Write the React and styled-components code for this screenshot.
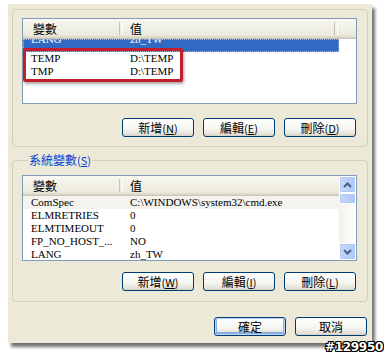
import React from 'react'
import styled, { createGlobalStyle } from 'styled-components'

const GlobalStyle = createGlobalStyle`
  html, body { margin: 0; padding: 0; background: #fff; }
  body { font-family: "Liberation Serif", "Noto Sans CJK TC", serif; }
  * { box-sizing: border-box; }
`

const Page = styled.div`
  position: relative;
  width: 384px;
  height: 353px;
  overflow: hidden;
  padding: 4px 0 0 8px;
`

const Dialog = styled.div`
  width: 364px;
  height: 339px;
  background: #ece9d8;
  box-shadow: 3px 4px 3px rgba(0, 0, 0, 0.55);
  padding: 5px 4px 0 4px;
  display: flex;
  flex-direction: column;
`

const Group = styled.fieldset`
  margin: ${p => p.$top || 0}px 0 0 0;
  padding: 8px 10px ${p => p.$bottom}px 9px;
  border: 1px solid #d0d0bf;
  border-radius: 4px;
  min-width: 0;
  display: flex;
  flex-direction: column;
`

const Legend = styled.legend`
  margin-left: 6px;
  padding: 0 1px;
  font: 12px/14px "Noto Sans CJK TC", sans-serif;
  color: #0046d5;
`

const List = styled.div`
  height: 86px;
  border: 1px solid #7f9db9;
  background: #fff;
  display: flex;
  overflow: hidden;
`

const ListMain = styled.div`
  flex: 1;
  display: flex;
  flex-direction: column;
  min-width: 0;
`

const Header = styled.div`
  display: flex;
  height: 20px;
  flex: none;
  background: linear-gradient(#f8f7f2, #ebeadb 85%, #d6d2c2);
  border-bottom: 1px solid #cbc7b8;
`

const HeadCell = styled.div`
  position: relative;
  width: ${p => (p.$w ? `${p.$w}px` : 'auto')};
  flex: ${p => (p.$w ? 'none' : 1)};
  padding-left: ${p => p.$pad}px;
  font: 12px/19px "Noto Sans CJK TC", sans-serif;
  color: #000;
  &::after {
    content: "";
    position: absolute;
    right: 0;
    top: 3px;
    bottom: 3px;
    width: 2px;
    border-left: 1px solid #c7c5b2;
    border-right: 1px solid #fff;
    display: ${p => (p.$w ? 'block' : 'none')};
  }
`

const Rows = styled.div`
  flex: 1;
  overflow: hidden;
  background: #fff;
`

const Row = styled.div`
  display: flex;
  height: 13px;
  overflow: hidden;
  width: ${p => (p.$w ? `${p.$w}px` : 'auto')};
  background: ${p => (p.$sel ? '#316ac5' : p.$tint ? '#f4f3ee' : 'transparent')};
  color: ${p => (p.$sel ? '#fff' : '#000')};
  outline: ${p => (p.$sel ? '1px dotted #9fb6e2' : 'none')};
  outline-offset: -1px;
  font: 11px/13px "Liberation Serif", serif;
`

const Cell = styled.div`
  width: ${p => (p.$w ? `${p.$w}px` : 'auto')};
  flex: ${p => (p.$w ? 'none' : 1)};
  padding-left: ${p => p.$pad}px;
  margin-top: ${p => (p.$clip ? -6 : 0)}px;
  white-space: nowrap;
  overflow: hidden;
`

const ScrollBar = styled.div`
  width: 17px;
  flex: none;
  display: flex;
  flex-direction: column;
  background: linear-gradient(to right, #f3f1ec, #fefefb);
`

const ScrollBtn = styled.div`
  width: 17px;
  height: ${p => p.$h || 17}px;
  margin-top: ${p => p.$mt || 0}px;
  border: 1px solid #fff;
  border-radius: 2px;
  background: linear-gradient(to right, #c8d7fb, #b9cdf9 60%, #aec5f4);
  box-shadow: inset 0 0 0 1px #b4c8f6;
  display: flex;
  align-items: center;
  justify-content: center;
`

const Track = styled.div`
  flex: 1;
`

const ButtonRow = styled.div`
  display: flex;
  justify-content: flex-end;
  gap: 9px;
  margin-top: ${p => p.$top}px;
  padding-right: ${p => p.$right || 0}px;
`

const Button = styled.button`
  width: 72px;
  height: 19px;
  padding: 0;
  border: 1px solid #003c74;
  border-radius: 3px;
  background: linear-gradient(#ffffff, #f4f4f0 60%, #e3e0d6 90%, #d6d0c5);
  box-shadow: ${p => (p.$default ? 'inset 0 0 0 1px #bcd4f6, inset 0 -1px 0 2px #89ade4' : 'none')};
  font: 12px/17px "Noto Sans CJK TC", sans-serif;
  color: #000;
`

const Key = styled.span`
  font-size: 11px;
  u { text-underline-offset: 1px; }
`

const Highlight = styled.div`
  position: absolute;
  left: 23px;
  top: 48px;
  width: 160px;
  height: 34px;
  border: 3px solid #c41e2b;
  border-radius: 2px;
  box-shadow: 1px 2px 3px rgba(0, 0, 0, 0.35);
`

const Watermark = styled.div`
  position: absolute;
  right: 1px;
  bottom: 0;
  font: bold 12px/12px "DejaVu Sans", sans-serif;
  color: #fff;
  letter-spacing: -0.3px;
  text-shadow: 1px 0 0 #000, -1px 0 0 #000, 0 1px 0 #000, 0 -1px 0 #000,
    1px 1px 0 #000, -1px -1px 0 #000, 1px -1px 0 #000, -1px 1px 0 #000;
`

const Chevron = ({ up }) => (
  <svg width="9" height="6" viewBox="0 0 9 6">
    <path
      d={up ? 'M1 5 L4.5 1.5 L8 5' : 'M1 1 L4.5 4.5 L8 1'}
      fill="none"
      stroke="#4d6185"
      strokeWidth="2"
    />
  </svg>
)

const userVars = [
  { name: 'LANG', value: 'zh_TW', sel: true },
  { name: 'TEMP', value: 'D:\\TEMP' },
  { name: 'TMP', value: 'D:\\TEMP' },
]

const sysVars = [
  { name: 'ComSpec', value: 'C:\\WINDOWS\\system32\\cmd.exe' },
  { name: 'ELMRETRIES', value: '0' },
  { name: 'ELMTIMEOUT', value: '0' },
  { name: 'FP_NO_HOST_...', value: 'NO' },
  { name: 'LANG', value: 'zh_TW' },
]

function Label({ text, k }) {
  return (
    <>
      {text}
      <Key>(<u>{k}</u>)</Key>
    </>
  )
}

export default function App() {
  return (
    <>
      <GlobalStyle />
      <Page>
        <Dialog>
          <Group $bottom={9}>
            <List>
              <ListMain>
                <Header>
                  <HeadCell $w={100} $pad={10}>變數</HeadCell>
                  <HeadCell $w={215} $pad={7}>值</HeadCell>
                  <HeadCell />
                </Header>
                <Rows>
                  {userVars.map((v, i) => (
                    <Row key={i} $sel={v.sel} $w={316}>
                      <Cell $w={100} $pad={8} $clip={v.sel}>{v.name}</Cell>
                      <Cell $pad={7} $clip={v.sel}>{v.value}</Cell>
                    </Row>
                  ))}
                </Rows>
              </ListMain>
            </List>
            <ButtonRow $top={14} $right={1}>
              <Button><Label text="新增" k="N" /></Button>
              <Button><Label text="編輯" k="E" /></Button>
              <Button><Label text="刪除" k="D" /></Button>
            </ButtonRow>
          </Group>

          <Group $top={6} $bottom={10}>
            <Legend>系統變數<Key>(<u>S</u>)</Key></Legend>
            <List>
              <ListMain>
                <Header>
                  <HeadCell $w={100} $pad={10}>變數</HeadCell>
                  <HeadCell $pad={7}>值</HeadCell>
                </Header>
                <Rows>
                  {sysVars.map((v, i) => (
                    <Row key={i} $tint={i === 0}>
                      <Cell $w={100} $pad={8}>{v.name}</Cell>
                      <Cell $pad={7}>{v.value}</Cell>
                    </Row>
                  ))}
                </Rows>
              </ListMain>
              <ScrollBar>
                <ScrollBtn><Chevron up /></ScrollBtn>
                <ScrollBtn $h={11} />
                <Track />
                <ScrollBtn><Chevron /></ScrollBtn>
              </ScrollBar>
            </List>
            <ButtonRow $top={11} $right={1}>
              <Button><Label text="新增" k="W" /></Button>
              <Button><Label text="編輯" k="I" /></Button>
              <Button><Label text="刪除" k="L" /></Button>
            </ButtonRow>
          </Group>

          <ButtonRow $top={15} $right={1}>
            <Button $default>確定</Button>
            <Button>取消</Button>
          </ButtonRow>
        </Dialog>
        <Highlight />
        <Watermark>#129950</Watermark>
      </Page>
    </>
  )
}
